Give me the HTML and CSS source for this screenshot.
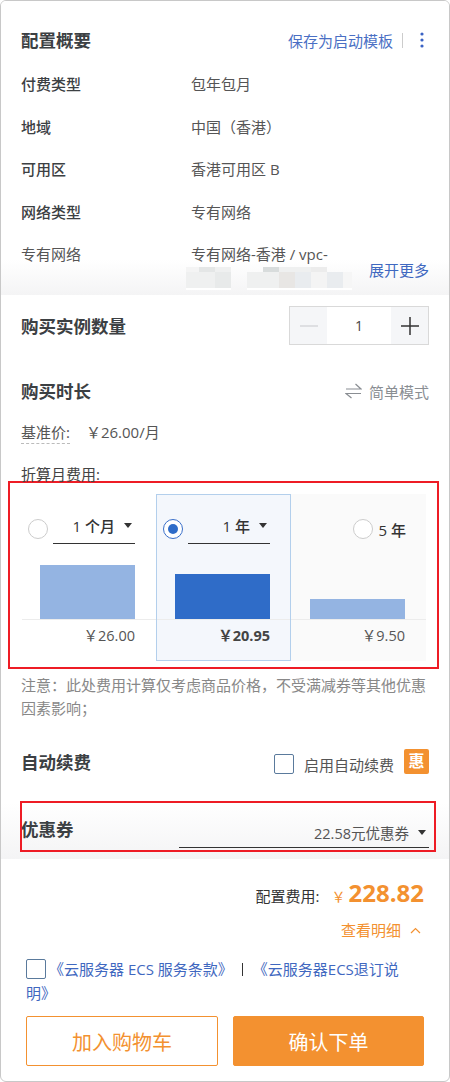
FILE: index.html
```html
<!DOCTYPE html>
<html lang="zh-CN">
<head>
  <meta charset="UTF-8" />
  <title>配置概要</title>
  <link rel="stylesheet" href="styles.css">
</head>
<body>
<div class="panel">

  <!-- 配置概要 -->
  <div class="summary">
    <div class="summary-head">
      <h2 class="title">配置概要</h2>
      <div class="head-actions">
        <a class="link-save">保存为启动模板</a>
        <span class="head-sep"></span>
        <svg class="more" width="4" height="16" viewBox="0 0 4 16"><circle cx="2" cy="2" r="1.6"/><circle cx="2" cy="8" r="1.6"/><circle cx="2" cy="14" r="1.6"/></svg>
      </div>
    </div>
    <div class="row"><span class="row-label">付费类型</span><span class="row-value">包年包月</span></div>
    <div class="row"><span class="row-label">地域</span><span class="row-value">中国（香港）</span></div>
    <div class="row"><span class="row-label">可用区</span><span class="row-value">香港可用区 B</span></div>
    <div class="row"><span class="row-label">网络类型</span><span class="row-value">专有网络</span></div>
    <div class="row"><span class="row-label row-label-soft">专有网络</span><span class="row-value">专有网络-香港 / vpc-</span></div>
    <!-- 打码区域 -->
    <div class="mosaic">
      <i class="s1"></i><i class="s2"></i><i class="s3"></i><i></i><i></i><i class="s4"></i><i class="s3"></i><i class="s3"></i><i class="s5"></i><i></i><i></i>
      <i class="s3"></i><i class="s3"></i><i class="s6"></i><i></i><i class="s3"></i><i class="s3"></i><i class="s7"></i><i class="s8"></i><i class="s1"></i><i class="s8"></i><i class="s9"></i>
      <i class="w"></i><i class="w"></i><i class="w"></i><i></i><i class="w"></i><i class="w"></i><i class="w"></i><i class="w"></i><i class="w"></i><i class="w"></i><i class="w"></i>
    </div>
    <a class="expand">展开更多</a>
  </div>

  <div class="config">
    <div class="qty-row">
      <h2 class="title">购买实例数量</h2>
      <div class="stepper">
        <span class="step"><svg width="18" height="18" viewBox="0 0 18 18"><path d="M0 9h18" stroke="#d4d6d9" stroke-width="1.4"/></svg></span>
        <span class="step-value">1</span>
        <span class="step"><svg width="18" height="18" viewBox="0 0 18 18"><path d="M0 9h18M9 0v18" stroke="#333" stroke-width="1.5"/></svg></span>
      </div>
    </div>

    <div class="duration-head">
      <h2 class="title">购买时长</h2>
      <span class="mode">
        <svg width="17" height="16" viewBox="0 0 17 16" fill="none" stroke="#8a8e93" stroke-width="1.2"><path d="M1 6h15L10.5 1M16 10.5H1L6.5 15"/></svg>
        简单模式
      </span>
    </div>

    <div class="base-price"><span class="dashed">基准价:</span><span>￥26.00/月</span></div>
    <div class="monthly">折算月费用:</div>

    <div class="mark-box">
      <div class="plans">
        <div class="plan">
          <div class="plan-top">
            <span class="radio"></span>
            <span class="select">1 个月<i class="caret"></i></span>
          </div>
          <div class="bar-area"><div class="bar bar-1"></div></div>
          <div class="price">￥26.00</div>
        </div>
        <div class="plan plan-active">
          <div class="plan-top">
            <span class="radio radio-on"></span>
            <span class="select">1 年<i class="caret"></i></span>
          </div>
          <div class="bar-area"><div class="bar bar-2"></div></div>
          <div class="price">￥20.95</div>
        </div>
        <div class="plan plan-gray">
          <div class="plan-top plan-top-end">
            <span class="radio"></span>
            <span class="fixed-term">5 年</span>
          </div>
          <div class="bar-area"><div class="bar bar-3"></div></div>
          <div class="price">￥9.50</div>
        </div>
      </div>
    </div>

    <p class="note">注意：此处费用计算仅考虑商品价格，不受满减券等其他优惠因素影响；</p>

    <div class="renew-row">
      <h2 class="title">自动续费</h2>
      <div class="renew-opt">
        <span class="check"></span>
        <span class="renew-text">启用自动续费</span>
        <span class="hui">惠</span>
      </div>
    </div>

    <div class="coupon-box">
      <h2 class="title">优惠券</h2>
      <div class="coupon-select">22.58元优惠券<i class="caret"></i></div>
    </div>
  </div>

  <!-- 底部 -->
  <div class="footer">
    <div class="cost"><span class="cost-label">配置费用:</span><span class="cost-yen">￥</span><span class="cost-num">228.82</span></div>
    <div class="detail">查看明细
      <svg width="11" height="7" viewBox="0 0 11 7" fill="none" stroke="#f39130" stroke-width="1.2"><path d="M1 6l4.5-4.5L10 6"/></svg>
    </div>
    <div class="terms">
      <span class="check check-terms"></span><a>《云服务器 ECS 服务条款》</a><span class="terms-sep"></span><a>《云服务器ECS退订说<br>明》</a>
    </div>
    <div class="buttons">
      <button class="btn btn-cart">加入购物车</button>
      <button class="btn btn-order">确认下单</button>
    </div>
  </div>

</div>
</body>
</html>
```

FILE: styles.css
```css
* {
  box-sizing: border-box;
}

body {
  margin: 0;
  background: #fff;
  font-family: "Open Sans", "Noto Sans CJK SC", sans-serif;
  font-size: 15px;
  color: #444;
}

.panel {
  width: 450px;
  height: 1082px;
  border: 1px solid #c8c8c8;
  border-radius: 6px;
  overflow: hidden;
  background: #fff;
}

.title {
  margin: 0;
  font-size: 17.5px;
  font-weight: 700;
  line-height: 26px;
  color: #3c4043;
}

/* summary */
.summary {
  position: relative;
  height: 294px;
  padding: 26px 20px 0;
  background: linear-gradient(to bottom, #fff 88%, #f4f4f5 100%);
}

.summary-head {
  display: flex;
  justify-content: space-between;
  align-items: center;
  margin-bottom: 15px;
}

.head-actions {
  display: flex;
  align-items: center;
}

.link-save {
  color: #4a6fc4;
  font-size: 15px;
}

.head-sep {
  width: 1px;
  height: 15px;
  margin: 0 17px 0 9px;
  background: #ccc;
}

.more {
  fill: #3a62c4;
  margin-right: 5px;
}

.row {
  display: flex;
  height: 42.5px;
  line-height: 32px;
}

.row-label {
  width: 170px;
  font-weight: 500;
  color: #3c4043;
}

.row-label-soft {
  font-weight: 400;
  color: #555;
}

.row-value {
  color: #555;
}

.mosaic {
  position: absolute;
  left: 185px;
  top: 266px;
  display: grid;
  grid-template-columns: 13px repeat(9, 16px) 9px;
  grid-template-rows: 5px 16px 2px;
}

.mosaic .s1 { background: #f4f4f4; }
.mosaic .s2 { background: #e4e6e6; }
.mosaic .s3 { background: #eff0f0; }
.mosaic .s4 { background: #d8dcdc; }
.mosaic .s5 { background: #ececec; }
.mosaic .s6 { background: #e8eaea; }
.mosaic .s7 { background: #e8e6e4; }
.mosaic .s8 { background: #e9ecef; }
.mosaic .s9 { background: #f6f6f6; }
.mosaic .w { background: #fff; }

.expand {
  position: absolute;
  right: 20px;
  top: 258px;
  color: #3f68c0;
}

/* config */
.config {
  height: 564px;
  padding: 0 20px;
  background: linear-gradient(to bottom, #fff 90%, #f4f4f5 100%);
}

.qty-row {
  display: flex;
  justify-content: space-between;
  align-items: center;
  padding-top: 11px;
}

.stepper {
  display: flex;
  width: 140px;
  height: 39px;
  border: 1px solid #d9d9d9;
}

.step {
  display: flex;
  align-items: center;
  justify-content: center;
  width: 37px;
  background: #f5f6f8;
}

.step-value {
  flex: 1;
  text-align: center;
  line-height: 37px;
  font-size: 14px;
}

.duration-head {
  display: flex;
  justify-content: space-between;
  align-items: center;
  margin-top: 33px;
}

.mode {
  display: flex;
  align-items: center;
  gap: 7px;
  color: #8a8e93;
}

.base-price {
  display: flex;
  gap: 16px;
  margin-top: 17px;
  line-height: 22px;
  color: #555;
}

.dashed {
  border-bottom: 1px dashed #bbb;
}

.monthly {
  margin-top: 19px;
  line-height: 22px;
  color: #444;
}

.mark-box {
  margin: -4px -10px 0 -13px;
  height: 188px;
  padding: 11px 11px 0 12px;
  border: 2px solid #ee1c25;
}

.plans {
  display: grid;
  grid-template-columns: 134px 135px 135px;
  height: 167px;
}

.plan {
  display: flex;
  flex-direction: column;
  padding: 0 21px 0 6px;
}

.plan-active {
  border: 1px solid #b3cfec;
  background: #f4f7fc;
  padding: 0 20px 0 6px;
}

.plan-gray {
  background: #fafafa;
}

.plan-top {
  display: flex;
  align-items: center;
  gap: 5px;
  height: 50px;
  padding-top: 20px;
}

.plan-active .plan-top {
  height: 49px;
  padding-top: 19px;
}

.plan-top-end {
  justify-content: flex-end;
}

.radio {
  flex: none;
  width: 20px;
  height: 20px;
  border: 1px solid #ccc;
  border-radius: 50%;
  background: #fff;
}

.radio-on {
  position: relative;
  border-color: #3a6fc9;
}

.radio-on::after {
  content: "";
  position: absolute;
  left: 4px;
  top: 4px;
  width: 10px;
  height: 10px;
  border-radius: 50%;
  background: #2f6cc8;
}

.select {
  flex: 1;
  display: flex;
  justify-content: flex-end;
  align-items: center;
  gap: 9px;
  height: 30px;
  padding: 0 3px 6px 0;
  border-bottom: 1px solid #333;
  font-weight: 500;
  color: #333;
}

.fixed-term {
  margin: 0 -1px 0 1px;
  font-weight: 500;
  color: #333;
}

.caret {
  display: inline-block;
  width: 0;
  height: 0;
  border-left: 4px solid transparent;
  border-right: 4px solid transparent;
  border-top: 5px solid #333;
}

.bar-area {
  display: flex;
  justify-content: flex-end;
  align-items: flex-end;
  height: 76px;
  margin: 0 -21px 0 -6px;
  padding-right: 21px;
  border-bottom: 1px solid #ececec;
}

.bar {
  width: 95px;
}

.bar-1 {
  height: 54px;
  background: #94b4e2;
}

.bar-2 {
  height: 45px;
  background: #2f6cc8;
}

.bar-3 {
  height: 20px;
  background: #94b4e2;
}

.plan-active .bar-area {
  margin: 0 -20px 0 -6px;
  padding-right: 20px;
}

.price {
  margin-top: 6px;
  text-align: right;
  font-size: 14.5px;
  line-height: 20px;
  color: #555;
}

.plan-active .price {
  font-weight: 700;
  color: #444;
}

.note {
  margin: 5px 0 0;
  width: 406px;
  line-height: 23px;
  color: #888;
}

.renew-row {
  display: flex;
  justify-content: space-between;
  align-items: center;
  margin-top: 29px;
}

.renew-opt {
  display: flex;
  align-items: center;
  padding-top: 4px;
}

.check {
  display: inline-block;
  flex: none;
  width: 20px;
  height: 20px;
  border: 1px solid #5a7a9c;
  border-radius: 2px;
  background: #fff;
}

.renew-text {
  margin-left: 10px;
  color: #555;
}

.hui {
  width: 25px;
  height: 25px;
  margin: -5px 0 0 10px;
  border-radius: 2px;
  background: #f39130;
  color: #fff;
  text-align: center;
  line-height: 25px;
  font-size: 16px;
  font-weight: 700;
}

.coupon-box {
  display: flex;
  justify-content: space-between;
  align-items: flex-end;
  height: 51px;
  margin: 26px 0 0 -1px;
  width: 416px;
  border: 2px solid #ee1c25;
  padding: 0 5px 2px 0;
}

.coupon-box .title {
  margin: 0 0 6px -1px;
}

.coupon-select {
  display: flex;
  justify-content: flex-end;
  align-items: center;
  gap: 9px;
  width: 250px;
  height: 30px;
  padding-right: 3px;
  border-bottom: 1px solid #333;
  color: #555;
  font-size: 14.5px;
}

/* footer */
.footer {
  padding: 0 25px;
}

.cost {
  display: flex;
  justify-content: flex-end;
  align-items: baseline;
  padding: 16px 0 0;
  line-height: 36px;
}

.cost-label {
  color: #333;
}

.cost-yen {
  margin: 0 3px 0 12px;
  color: #f39130;
  font-size: 14px;
}

.cost-num {
  color: #f39130;
  font-size: 24px;
  font-weight: 700;
}

.detail {
  display: flex;
  justify-content: flex-end;
  align-items: center;
  gap: 9px;
  margin-top: 4px;
  padding-right: 3px;
  color: #f39130;
  line-height: 22px;
}

.terms {
  margin-top: 16px;
  line-height: 24px;
  color: #3f68c0;
}

.check-terms {
  vertical-align: -4px;
  margin-right: 3px;
}

.terms-sep {
  display: inline-block;
  width: 1px;
  height: 13px;
  margin: 0 10px 0 9px;
  background: #333;
  vertical-align: -1px;
}

.buttons {
  display: flex;
  justify-content: space-between;
  margin-top: 11px;
}

.btn {
  width: 192px;
  height: 50px;
  border-radius: 2px;
  font-family: inherit;
  font-size: 20px;
  border: 1px solid #f39130;
}

.btn-cart {
  background: #fff;
  color: #f39130;
}

.btn-order {
  width: 191px;
  background: #f39130;
  color: #fff;
}
```
